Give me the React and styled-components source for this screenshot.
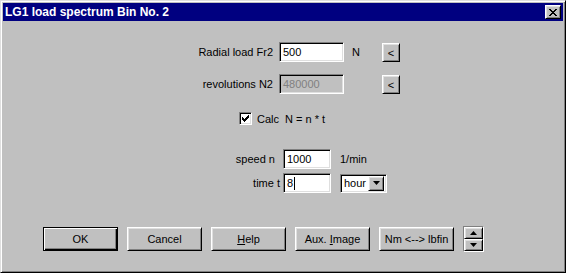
import React from 'react';
import styled, { createGlobalStyle, css } from 'styled-components';

const Global = createGlobalStyle`
  html, body {
    margin: 0;
    padding: 0;
    background: #c0c0c0;
  }
  body {
    font-family: "Liberation Sans", Arial, sans-serif;
    font-size: 11px;
    color: #000;
  }
`

const raised = css`
  box-sizing: border-box;
  background: #c0c0c0;
  border: 1px solid;
  border-color: #fff #000 #000 #fff;
  box-shadow: inset 1px 1px #dfdfdf, inset -1px -1px #808080;
`

const sunken = css`
  box-sizing: border-box;
  border: 1px solid;
  border-color: #808080 #fff #fff #808080;
  box-shadow: inset 1px 1px #000, inset -1px -1px #dfdfdf;
`

const Window = styled.div`
  box-sizing: border-box;
  width: 566px;
  height: 273px;
  background: #c0c0c0;
  border: 1px solid;
  border-color: #dfdfdf #000 #000 #dfdfdf;
  box-shadow: inset 1px 1px #fff, inset -1px -1px #808080;
  padding: 2px;
  display: flex;
  flex-direction: column;
`

const TitleBar = styled.div`
  height: 18px;
  background: #000080;
  color: #fff;
  display: flex;
  align-items: center;
  justify-content: space-between;
  padding: 0 2px;
  font-weight: bold;
  font-size: 12px;
`

const CloseButton = styled.div`
  ${raised};
  width: 16px;
  height: 14px;
  display: flex;
  align-items: center;
  justify-content: center;
`

const Body = styled.div`
  padding-top: 21px;
  display: flex;
  flex-direction: column;
`

const FormGrid = styled.div`
  display: grid;
  grid-template-columns: ${p => p.cols};
  grid-auto-rows: 20px;
  row-gap: ${p => p.rowGap}px;
  margin-top: ${p => p.top || 0}px;
  align-items: center;
`

const Label = styled.div`
  text-align: right;
  padding-right: ${p => p.pad}px;
  white-space: nowrap;
`

const Unit = styled.div`
  padding-left: ${p => p.pad}px;
  white-space: nowrap;
  display: flex;
  align-items: center;
`

const Field = styled.div`
  ${sunken};
  height: 20px;
  background: ${p => (p.disabled ? '#c0c0c0' : '#fff')};
  color: ${p => (p.disabled ? '#808080' : '#000')};
  padding: 0 3px;
  display: flex;
  align-items: center;
  white-space: nowrap;
`

const Caret = styled.span`
  display: inline-block;
  width: 1px;
  height: 13px;
  background: #000;
  margin-left: 1px;
`

const SmallButton = styled.div`
  ${raised};
  width: 18px;
  height: 19px;
  align-self: end;
  display: flex;
  align-items: center;
  justify-content: center;
  font-size: 11px;
`

const CheckRow = styled.div`
  display: flex;
  align-items: center;
  margin-top: 18px;
  padding-left: 236px;
  height: 13px;
`

const CheckBox = styled.div`
  ${sunken};
  width: 13px;
  height: 13px;
  background: #fff;
  display: flex;
  align-items: center;
  justify-content: center;
`

const CheckText = styled.span`
  margin-left: 5px;
  white-space: pre;
`

const Select = styled.div`
  ${sunken};
  width: 47px;
  height: 19px;
  background: #fff;
  display: flex;
  align-items: center;
  justify-content: space-between;
  padding: 2px 2px 2px 3px;
`

const DropButton = styled.div`
  ${raised};
  width: 16px;
  height: 15px;
  display: flex;
  align-items: center;
  justify-content: center;
`

const ButtonRow = styled.div`
  display: flex;
  align-items: center;
  gap: 9px;
  margin-top: 33px;
  padding-left: 40px;
`

const Button = styled.div`
  ${raised};
  width: 75px;
  height: 24px;
  display: flex;
  align-items: center;
  justify-content: center;
  ${p => p.primary && css`
    border-color: #000;
    box-shadow: inset 1px 1px #fff, inset -1px -1px #000, inset -2px -2px #808080;
  `}
`

const Spinner = styled.div`
  box-sizing: border-box;
  width: 21px;
  height: 26px;
  border: 1px solid;
  border-color: #808080 #fff #fff #808080;
  display: flex;
  flex-direction: column;
`

const SpinHalf = styled.div`
  ${raised};
  height: 12px;
  display: flex;
  align-items: center;
  justify-content: center;
`

const Arrow = ({ up }) => (
  <svg width="7" height="4" viewBox="0 0 7 4">
    <path d={up ? 'M3.5 0 L7 4 L0 4 Z' : 'M0 0 L7 0 L3.5 4 Z'} fill="#000" />
  </svg>
)

export default function App() {
  return (
    <>
      <Global />
      <Window>
        <TitleBar>
          <span>LG1 load spectrum Bin No. 2</span>
          <CloseButton>
            <svg width="8" height="7" viewBox="0 0 8 7">
              <path d="M0 0h2v1h1v1h2V1h1V0h2v1H7v1H6v1H5v1h1v1h1v1h1v1H6V6H5V5H3v1H2v1H0V6h1V5h1V4h1V3H2V2H1V1H0z" fill="#000" />
            </svg>
          </CloseButton>
        </TitleBar>
        <Body>
          <FormGrid cols="276px 65px 38px 18px" rowGap={12}>
            <Label pad={6}>Radial load Fr2</Label>
            <Field>500</Field>
            <Unit pad={8}>N</Unit>
            <SmallButton>&lt;</SmallButton>

            <Label pad={6}>revolutions N2</Label>
            <Field disabled>480000</Field>
            <Unit pad={8} />
            <SmallButton>&lt;</SmallButton>
          </FormGrid>

          <CheckRow>
            <CheckBox>
              <svg width="7" height="7" viewBox="0 0 7 7">
                <path d="M0 2h1v1h1v1h1V3h1V2h1V1h1V0h1v3H6v1H5v1H4v1H3v1H2V6H1V5H0z" fill="#000" />
              </svg>
            </CheckBox>
            <CheckText>Calc  N = n * t</CheckText>
          </CheckRow>

          <FormGrid cols="280px 48px auto" rowGap={4} top={24}>
            <Label pad={8}>speed n</Label>
            <Field>1000</Field>
            <Unit pad={9}>1/min</Unit>

            <Label pad={3}>time t</Label>
            <Field>8<Caret /></Field>
            <Unit pad={9}>
              <Select>
                <span>hour</span>
                <DropButton><Arrow /></DropButton>
              </Select>
            </Unit>
          </FormGrid>

          <ButtonRow>
            <Button primary>OK</Button>
            <Button>Cancel</Button>
            <Button><span><u>H</u>elp</span></Button>
            <Button><span>Aux. <u>I</u>mage</span></Button>
            <Button>Nm &lt;--&gt; lbfin</Button>
            <Spinner>
              <SpinHalf><Arrow up /></SpinHalf>
              <SpinHalf><Arrow /></SpinHalf>
            </Spinner>
          </ButtonRow>
        </Body>
      </Window>
    </>
  );
}
